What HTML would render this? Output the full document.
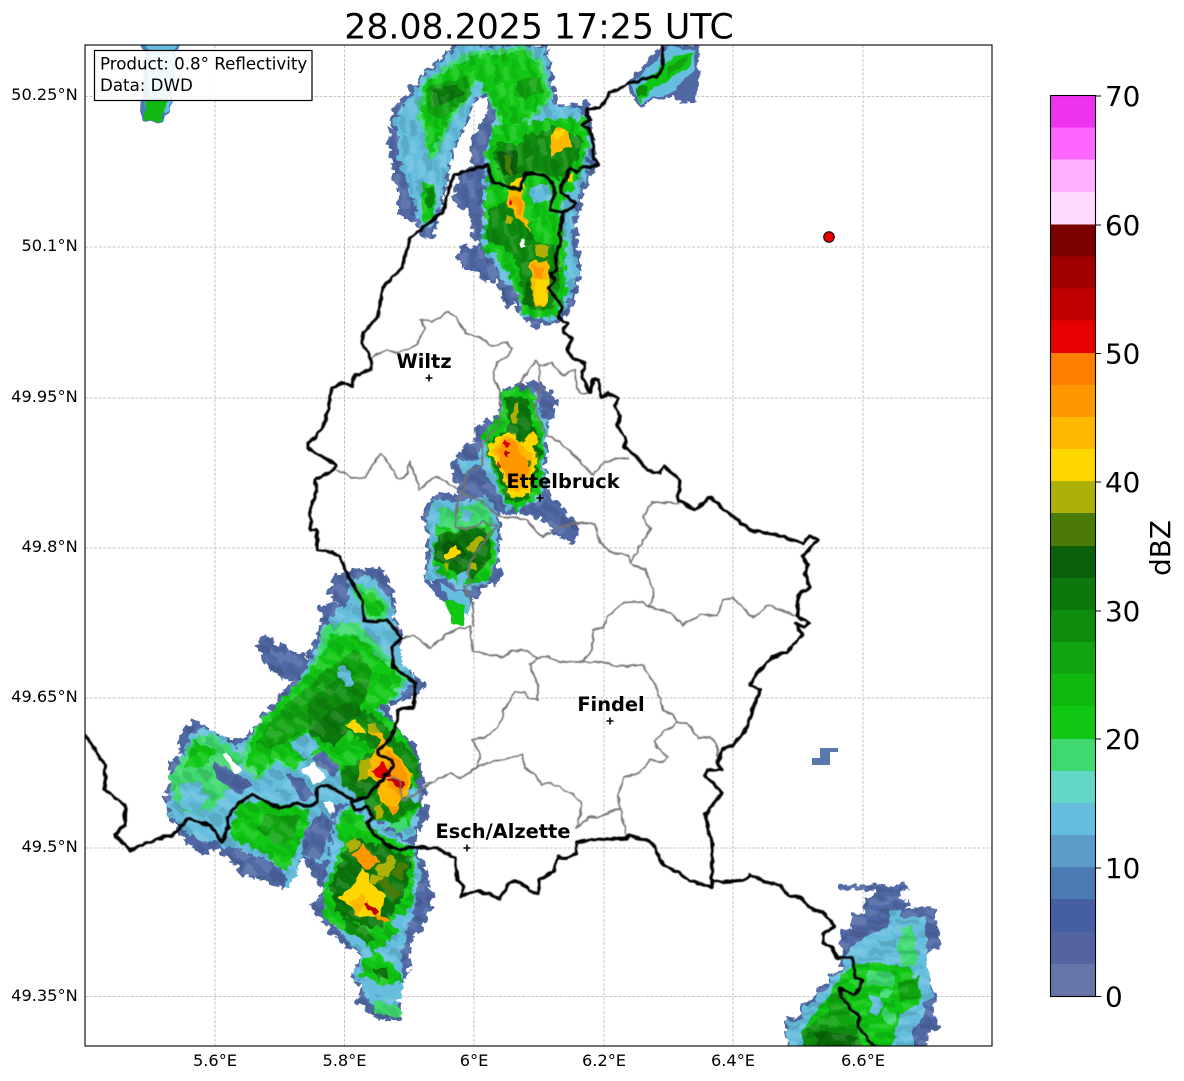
<!DOCTYPE html>
<html><head><meta charset="utf-8"><title>Radar</title>
<style>
html,body{margin:0;padding:0;background:#fff;width:1184px;height:1081px;overflow:hidden}
svg{display:block}
text{font-family:"DejaVu Sans","Liberation Sans",sans-serif;fill:#000}
.lat{font-size:16.2px;text-anchor:end}
.lon{font-size:16.2px;text-anchor:middle}
.city{font-size:19.4px;font-weight:bold;text-anchor:middle}
.cb{font-size:27.8px}
.e{stroke-width:15;stroke-dasharray:22 14;stroke-linejoin:bevel}
.f{stroke-width:9;stroke-dasharray:18 12;stroke-linejoin:bevel}
</style></head><body>
<svg width="1184" height="1081" viewBox="0 0 1184 1081" xmlns="http://www.w3.org/2000/svg">
<defs>
<clipPath id="ax"><rect x="85" y="45" width="907" height="1001"/></clipPath>
<filter id="j" filterUnits="userSpaceOnUse" x="0" y="0" width="1184" height="1081" color-interpolation-filters="sRGB">
<feTurbulence type="fractalNoise" baseFrequency="0.1" numOctaves="2" seed="4"/>
<feColorMatrix type="matrix" values="1 0 0 0 0 0 1 0 0 0 0 0 1 0 0 0 0 0 0 1" result="t"/>
<feDisplacementMap in="SourceGraphic" in2="t" scale="9" xChannelSelector="R" yChannelSelector="G"/>
</filter>
<filter id="w" filterUnits="userSpaceOnUse" x="0" y="0" width="1184" height="1081" color-interpolation-filters="sRGB">
<feTurbulence type="fractalNoise" baseFrequency="0.16" numOctaves="1" seed="2"/>
<feColorMatrix type="matrix" values="1 0 0 0 0 0 1 0 0 0 0 0 1 0 0 0 0 0 0 1" result="t"/>
<feDisplacementMap in="SourceGraphic" in2="t" scale="4.5" xChannelSelector="R" yChannelSelector="G"/>
<feGaussianBlur stdDeviation="0.4"/>
</filter>
<pattern id="tex" patternUnits="userSpaceOnUse" width="60" height="42" patternTransform="rotate(35) scale(3)">
<rect x="0" y="0" width="16" height="8" fill="#000" fill-opacity=".10"/>
<rect x="16" y="0" width="18" height="6" fill="#fff" fill-opacity=".10"/>
<rect x="38" y="3" width="20" height="7" fill="#000" fill-opacity=".07"/>
<rect x="4" y="11" width="18" height="7" fill="#fff" fill-opacity=".09"/>
<rect x="24" y="12" width="16" height="8" fill="#000" fill-opacity=".12"/>
<rect x="44" y="14" width="14" height="8" fill="#fff" fill-opacity=".11"/>
<rect x="0" y="23" width="14" height="8" fill="#fff" fill-opacity=".12"/>
<rect x="16" y="25" width="20" height="6" fill="#000" fill-opacity=".09"/>
<rect x="40" y="26" width="18" height="6" fill="#000" fill-opacity=".11"/>
<rect x="6" y="34" width="22" height="6" fill="#000" fill-opacity=".07"/>
<rect x="32" y="35" width="18" height="7" fill="#fff" fill-opacity=".10"/>
</pattern>
<pattern id="texN" href="#tex" patternTransform="rotate(82) scale(3 2.4)"></pattern>
<pattern id="texS" href="#tex" patternTransform="scale(3.5 2.2)"></pattern>
<polygon id="oN" points="225,15 500,15 530,200 620,190 640,300 640,380 600,480 585,560 600,700 575,800 540,840 470,860 425,820 400,790 380,800 355,720 315,720 280,690 260,690 230,650 250,620 310,630 280,580 270,510 225,490 240,400 280,385 275,310 320,230 330,170 290,170 220,330 160,590 130,590 105,540 60,530 60,460 50,440 30,320 40,210 110,130 170,70"/>
<polygon id="oE" points="610,270 700,250 720,250 770,300 755,350 730,400 740,470 730,530 730,560 830,680 820,730 770,700 720,650 660,630 620,640 590,620 600,690 590,760 600,840 550,860 520,900 450,895 380,830 385,700 370,640 410,585 480,590 460,490 500,440 530,420 525,385 600,350"/>
<polygon id="oW" points="505,70 530,20 580,0 670,0 710,100 695,135 730,200 700,270 800,350 720,395 680,400 700,470 770,540 780,610 800,670 775,700 810,725 760,800 740,870 800,940 790,960 490,960 470,930 430,850 370,950 250,910 175,830 115,850 85,820 25,740 35,710 20,690 40,630 25,580 65,560 65,490 100,455 190,510 240,510 290,470 340,410 400,330 345,310 290,225 320,200 380,240 445,270 450,250 490,160 480,115 530,110 510,60"/>
<polygon id="oS" points="100,20 130,10 340,130 385,240 395,310 360,390 330,420 325,510 290,590 300,660 240,655 170,600 190,570 155,540 190,470 95,395 35,320 60,290 100,250 60,240 40,200 90,180"/>
<polygon id="oD" points="180,50 380,45 385,60 355,65 355,90 390,95 360,115 465,115 480,235 445,240 430,280 465,380 460,440 475,475 440,480 440,560 20,560 25,445 65,440 65,400 110,390 115,345 150,345 150,310 185,310 185,255 185,180 220,180 220,135 255,135 250,90 285,80 280,60 180,55"/>
</defs>
<rect width="1184" height="1081" fill="#fff"/>

<g stroke="#b4b4b4" stroke-width="0.8" stroke-dasharray="3 1.6" fill="none">
<path d="M215 45V1046M344.5 45V1046M474 45V1046M604 45V1046M733 45V1046M863 45V1046"/>
<path d="M85 96.5H992M85 247H992M85 398H992M85 548H992M85 698H992M85 848H992M85 996.5H992"/>
</g>

<g clip-path="url(#ax)">
<g filter="url(#j)">
<!-- top-left sliver -->
<g transform="translate(80 30) scale(.3333)">
<polygon fill="#4c7ab2" points="192,40 295,40 270,245 240,282 190,270 182,235"/>
<polygon fill="#65bedd" points="205,40 285,40 268,245 240,250 200,240"/>
<polygon fill="#10b810" points="205,205 265,205 240,278 195,268"/>
</g>

<!-- north storm -->
<g transform="translate(380 40) scale(.3333)">
<use href="#oN" class="e" fill="#5068a4" stroke="#5068a4"/>
<polygon class="e" fill="#65bedd" stroke="#65bedd" points="235,20 490,20 520,200 600,210 630,300 620,390 590,470 570,600 590,700 560,790 520,840 430,820 410,750 370,720 310,610 315,520 320,340 350,240 370,190 320,130 280,180 210,340 165,540 130,570 100,470 60,370 50,240 120,130 180,70"/>
<polygon class="f" fill="#3fd96f" stroke="#3fd96f" points="270,40 430,20 480,60 515,170 440,250 370,280 330,180 290,120 260,170 200,260 180,320 150,360 115,220 130,130 200,80"/>
<polygon class="f" fill="#10c814" stroke="#10c814" points="275,55 420,35 470,65 505,165 440,235 375,260 335,170 290,110 255,160 195,245 175,300 150,340 130,220 135,130 200,95"/>
<polygon fill="#10a410" points="140,140 260,110 275,160 200,225 160,240 135,190"/>
<polygon fill="#0c780c" points="155,150 235,130 245,165 195,195 160,205"/>
<polygon fill="#10a410" points="400,125 480,110 490,160 430,175"/>
<polygon class="e" fill="#10c814" stroke="#10c814" points="350,260 450,250 530,240 610,240 620,320 610,380 570,450 530,520 550,600 550,700 560,760 520,830 440,825 415,760 380,680 320,620 320,500 330,380 320,340"/>
<polygon fill="#10c814" points="125,430 160,430 165,530 130,550"/>
<polygon fill="#0c8a0c" points="135,445 158,440 158,500 140,505"/>
<polygon class="f" fill="#0e8c0e" stroke="#0e8c0e" points="350,310 415,320 440,290 520,265 600,290 600,340 570,390 530,420 490,400 430,400 430,440 380,430 350,360"/>
<polygon class="f" fill="#0e8c0e" stroke="#0e8c0e" points="330,510 380,480 450,570 470,610 520,620 540,680 530,770 520,800 470,810 430,790 420,680 380,620 320,600"/>
<polygon fill="#0a5f0a" points="350,335 410,330 415,400 370,410"/>
<polygon fill="#0a6f0a" points="440,720 470,720 470,800 430,790"/>
<polygon fill="#65bedd" points="450,440 510,430 510,480 455,490"/>
<use href="#oN" fill="url(#texN)"/>
<polygon fill="#4a7a08" points="370,345 395,345 392,410 375,400"/>
<polygon fill="#adb006" points="372,530 400,530 395,550 378,548"/>
<polygon fill="#adb006" points="470,610 505,620 505,650 475,650"/>
<polygon fill="#ffd700" points="400,420 430,405 430,450 395,440"/>
<polygon fill="#ffb800" points="385,450 425,450 440,530 452,575 430,550 400,520 380,490"/>
<polygon fill="#ff9800" points="395,470 425,470 432,525 405,510"/>
<rect x="389" y="478" width="8" height="15" fill="#e00000"/>
<polygon fill="#ffb800" points="450,670 505,660 510,750 500,790 470,795 455,740"/>
<polygon fill="#ffd700" points="462,720 505,715 500,785 472,790"/>
<polygon fill="#ff9800" points="460,680 490,680 490,715 465,715"/>
<polygon fill="#ffb800" points="510,290 530,265 570,275 570,320 540,335 515,350"/>
<polygon fill="#ffd700" points="520,275 550,270 550,290 525,295"/>
<polygon fill="#ffd700" points="562,410 580,400 580,430 560,425"/>
<rect x="425" y="595" width="12" height="30" fill="#fff"/>
</g>

<!-- top right -->
<g transform="translate(380 40) scale(.3333)">
<polygon class="f" fill="#5068a4" stroke="#5068a4" points="850,15 955,15 955,90 945,180 900,190 890,160 850,170 770,195 745,130 800,70"/>
<polygon fill="#65bedd" points="860,20 945,30 945,90 880,150 835,165 775,190 760,130 810,80"/>
<polygon fill="#10c814" points="880,50 945,40 925,85 860,125 800,160 775,190 775,140 830,95"/>
<polygon fill="#10a410" points="870,70 925,50 900,85 850,115"/>
<polygon fill="#0e8c0e" points="775,140 800,130 795,160 770,175"/>
</g>

<!-- Ettelbruck storm -->
<g transform="translate(300 300) scale(.3333)">
<use href="#oE" class="e" fill="#5068a4" stroke="#5068a4"/>
<polygon class="f" fill="#65bedd" stroke="#65bedd" points="610,280 700,280 725,350 745,370 735,420 730,520 720,590 660,625 620,625 590,600 530,530 490,510 475,480 530,490 545,430 600,360"/>
<polygon fill="#5068a4" points="500,510 540,500 620,610 600,640 560,590"/>
<polygon class="f" fill="#10c814" stroke="#10c814" points="610,270 690,270 710,340 730,400 725,500 720,580 650,630 600,570 570,470 545,420 570,380 610,340"/>
<polygon class="f" fill="#0c780c" stroke="#0c780c" points="620,290 680,300 700,380 720,430 710,520 690,590 650,610 620,590 580,490 560,430 610,400 630,370"/>
<polygon class="f" fill="#65bedd" stroke="#65bedd" points="405,600 470,610 560,590 590,650 590,770 560,850 490,870 430,830 380,840 395,750 380,660"/>
<polygon fill="#3fd96f" points="415,625 470,630 550,600 580,660 560,690 480,700 420,690"/>
<polygon fill="#65bedd" points="490,630 520,640 505,670 485,660"/>
<polygon class="f" fill="#10c814" stroke="#10c814" points="410,680 470,690 570,670 585,770 570,830 510,855 440,830 400,790 410,730"/>
<polygon fill="#0c780c" points="415,710 480,690 560,680 575,770 520,840 450,810 400,780"/>
<polygon fill="#0a5f0a" points="425,730 470,715 500,760 470,800 430,775"/>
<use href="#oE" fill="url(#tex)"/>
<polygon fill="#adb006" points="640,310 655,305 650,370 635,365"/>
<polygon class="f" fill="#ffd700" stroke="#ffd700" points="560,435 630,395 660,430 700,395 715,425 700,450 710,490 690,540 690,580 630,590 615,530 590,490"/>
<polygon fill="#ffb800" points="575,445 630,405 670,440 700,460 700,500 680,550 680,570 635,575 620,530 595,480"/>
<polygon fill="#ff9800" points="590,450 630,415 675,470 685,510 660,550 632,550 610,500"/>
<polygon fill="#e00000" points="620,422 630,432 620,444 610,432"/>
<polygon fill="#c00000" points="620,448 630,458 620,470 610,458"/>
<polygon fill="#e00000" points="598,488 608,500 604,508 595,496"/>
<polygon fill="#4a7a08" points="678,480 695,480 690,498 680,495"/>
<polygon fill="#ffd700" points="430,760 470,735 478,755 440,782"/>
<polygon fill="#adb006" points="500,745 530,710 550,720 520,760"/>
<polygon fill="#adb006" points="505,790 525,785 530,810 510,810"/>
<polygon fill="#adb006" points="430,790 450,795 440,815"/>
<polygon fill="#65bedd" points="470,820 510,810 500,850 470,850"/>
</g>
<polygon fill="#5068a4" points="426,580 445,590 475,600 468,610 440,600"/>
<polygon fill="#65bedd" points="440,585 470,595 470,615 455,612"/>
<polygon fill="#10c814" points="443,598 465,606 462,626 452,623"/>

<!-- SW storm -->
<g transform="translate(160 570) scale(.3333)">
<use href="#oW" class="e" fill="#5068a4" stroke="#5068a4"/>
<polygon class="e" fill="#65bedd" stroke="#65bedd" points="570,30 630,20 690,90 720,270 760,330 700,390 640,400 690,470 760,600 770,700 770,760 730,840 730,870 770,950 510,960 510,900 430,840 385,950 370,890 260,840 180,820 100,800 30,735 40,625 100,490 140,480 230,540 290,480 350,420 420,340 470,240 510,150 570,90"/>
<polygon class="f" fill="#3fd96f" stroke="#3fd96f" points="30,625 100,510 160,500 240,560 230,620 170,700 140,720 75,720 40,680"/>
<polygon fill="#65bedd" points="60,650 110,630 150,680 110,730 65,710"/>
<polygon fill="#10c814" points="100,510 170,540 130,590 75,590"/>
<polygon fill="#3fd96f" points="590,40 640,60 690,110 665,155 620,145 585,70"/>
<polygon fill="#10c814" points="600,60 640,75 675,110 660,145 625,135"/>
<polygon class="f" fill="#3fd96f" stroke="#3fd96f" points="500,170 590,160 660,230 740,330 680,400 600,400 520,530 430,560 400,600 350,570 290,630 240,570 290,470 340,420 420,340 470,260"/>
<polygon class="f" fill="#10c814" stroke="#10c814" points="520,190 590,200 640,250 725,330 680,395 640,420 700,460 770,570 770,620 700,680 780,700 740,770 660,750 630,700 560,640 540,600 450,550 400,590 350,560 295,610 260,570 295,470 340,420 420,340 470,280"/>
<polygon fill="#10a410" points="340,440 500,300 590,240 640,300 610,400 520,520 450,480 400,500 330,540 290,520"/>
<polygon fill="#0e8c0e" points="440,400 540,320 620,340 600,420 520,530 450,490"/>
<polygon fill="#0c780c" points="450,480 520,410 590,400 610,430 570,480 520,530"/>
<polygon fill="#65bedd" points="530,300 560,290 585,340 555,355"/>
<polygon fill="#65bedd" points="390,520 450,490 480,530 430,565"/>
<polygon fill="#5068a4" points="455,570 490,540 540,590 520,620"/>
<polygon fill="#5068a4" points="160,570 210,600 280,640 240,670 170,630"/>
<polygon fill="#5068a4" points="380,610 420,620 470,680 420,690"/>
<polygon class="f" fill="#10c814" stroke="#10c814" points="310,700 450,720 420,810 380,900 300,840 210,800 240,700"/>
<polygon fill="#10a410" points="320,730 420,740 400,810 350,820 290,780"/>
<polygon fill="#5068a4" points="430,780 490,720 520,760 480,870 430,850"/>
<polygon class="f" fill="#0e8c0e" stroke="#0e8c0e" points="560,460 620,420 680,480 770,570 770,620 730,680 780,700 700,760 640,740 610,690 550,640 545,610 600,570 650,540 560,480"/>
<polygon fill="#0c780c" points="560,640 600,590 640,600 650,670 610,680"/>
<use href="#oW" fill="url(#tex)"/>
<polygon fill="#fff" points="185,555 200,545 247,597 228,612"/>
<polygon fill="#fff" points="425,600 465,580 500,625 468,645"/>
<polygon fill="#fff" points="490,700 510,690 535,720 515,735"/>
<polygon fill="#ffd700" points="560,465 590,450 620,490 590,490"/>
<polygon fill="#adb006" points="615,460 645,450 660,490 630,490"/>
<polygon fill="#adb006" points="600,570 650,560 640,610 590,640"/>
<polygon fill="#ffb800" points="630,485 660,490 700,540 725,570 760,625 740,670 700,730 660,690 650,640 625,610 640,540 665,510"/>
<polygon fill="#ff9800" points="680,540 720,570 745,640 720,680 685,650"/>
<polygon fill="#e00000" points="635,600 660,575 695,610 670,630"/>
<polygon fill="#c00000" points="680,630 700,620 735,640 720,655"/>
<polygon fill="#adb006" points="640,710 670,700 665,745 650,745"/>
<polygon fill="#ff9800" points="680,705 720,710 700,735"/>
<polygon fill="#3fd96f" points="680,770 730,745 745,770 700,810"/>
<polygon fill="#10c814" points="750,620 780,640 765,660"/>
</g>

<!-- S storm -->
<g transform="translate(300 800) scale(.3333)">
<use href="#oS" class="e" fill="#5068a4" stroke="#5068a4"/>
<polygon class="f" fill="#65bedd" stroke="#65bedd" points="110,40 150,20 340,140 360,230 330,360 300,450 310,560 285,630 220,620 190,570 200,540 160,540 190,470 130,400 70,340 75,280"/>
<polygon class="f" fill="#10c814" stroke="#10c814" points="70,350 70,280 130,140 110,80 150,20 230,100 340,150 340,290 290,400 220,450 150,400"/>
<polygon fill="#10c814" points="185,490 225,450 300,520 310,550 280,570 220,540 180,530"/>
<polygon fill="#0c780c" points="225,505 255,505 265,535 230,540"/>
<polygon fill="#3fd96f" points="225,600 310,630 300,650 225,640"/>
<polygon class="f" fill="#0c780c" stroke="#0c780c" points="90,260 135,160 170,110 200,130 330,170 320,250 300,300 250,380 200,380 120,340 110,310"/>
<polygon fill="#0e8c0e" points="130,350 200,390 230,420 190,435 130,385"/>
<use href="#oS" fill="url(#tex)"/>
<polygon fill="#ffd700" points="115,295 150,265 190,200 210,245 255,290 240,350 180,350 160,320"/>
<polygon fill="#ffb800" points="150,300 190,280 200,320 170,345"/>
<polygon fill="#ff9800" points="160,165 190,135 240,185 210,210 185,190"/>
<polygon fill="#ff9800" points="205,305 235,345 270,360 255,375 205,330"/>
<polygon fill="#c00000" points="195,320 205,312 235,335 225,345"/>
<polygon fill="#adb006" points="130,130 170,110 180,140 155,160"/>
<polygon fill="#adb006" points="240,190 275,160 290,180 260,230 225,220"/>
<polygon fill="#4a7a08" points="290,190 325,200 300,240 270,220"/>
<polygon fill="#4a7a08" points="230,240 250,230 300,280 280,300"/>
<polygon fill="#adb006" points="210,225 245,225 235,260 210,250"/>
<polygon fill="#65bedd" points="285,340 325,350 300,385 280,370"/>
<polygon fill="#65bedd" points="160,540 280,560 300,540 310,570 285,600 240,585 185,565"/>
<polygon fill="#65bedd" points="130,400 170,400 200,440 160,435"/>
</g>

<!-- SE storm -->
<g transform="translate(780 870) scale(.3333)">
<use href="#oD" class="f" fill="#5068a4" stroke="#5068a4"/>
<polygon fill="#65bedd" points="330,120 360,120 360,140 435,140 445,240 440,280 460,380 430,400 430,440 400,470 400,560 20,560 25,450 65,450 70,405 110,400 115,375 150,350 150,315 185,315 190,260 225,220 290,190 325,170"/>
<polygon fill="#3fd96f" points="370,175 400,170 405,225 410,280 370,290 350,240"/>
<polygon fill="#10c814" points="225,280 390,290 420,380 420,400 360,430 330,560 65,560 70,470 105,430 145,375 185,320"/>
<polygon fill="#3fd96f" points="265,300 335,305 340,350 265,345"/>
<polygon fill="#3fd96f" points="300,360 345,360 340,380 300,380"/>
<polygon fill="#3fd96f" points="310,420 350,430 340,470 305,450"/>
<polygon fill="#65bedd" points="270,375 305,380 300,430 270,425"/>
<polygon fill="#65bedd" points="350,465 400,470 400,560 360,560"/>
<polygon fill="#10a410" points="145,375 190,360 230,440 230,495 270,560 65,560 65,480 110,450 145,420"/>
<polygon fill="#0e8c0e" points="100,460 230,480 235,510 270,560 65,560 65,490"/>
<polygon fill="#0a6a0a" points="105,485 180,490 230,500 225,560 110,560"/>
<polygon fill="#10a410" points="350,340 415,320 420,380 360,395"/>
<use href="#oD" fill="url(#texS)"/>
</g>
</g>

<polygon fill="#5a78ac" points="820,748 838,748 838,752 830,752 830,765 812,765 812,758 820,758"/>

<g filter="url(#w)">
<!-- gray canton borders -->
<g fill="none" stroke="#757575" stroke-width="1.8" stroke-linejoin="round">
<path d="M372 357 388 350 400 353 418 343 425 328 420 320 432 322 448 312 457 317 465 333 482 338 492 347 507 342 512 348 508 357 497 362 493 378 500 390 500 407 500 423 492 433 483 443 482 465 467 473 463 493"/>
<path d="M518 385 535 360 540 365 552 363 562 375 575 370 577 387 580 393 592 393"/>
<path d="M540 365 540 387 535 407 545 433 567 448 593 475 605 462 628 457"/>
<path d="M336 470 343 472 350 478 365 477 381 453 398 478 405 478 410 462 420 490 435 476 447 482 463 493 457 500 455 527 467 530 483 522 497 527 490 533 483 543 470 563 467 573 472 583 463 587 473 603 473 627"/>
<path d="M463 493 480 500 497 515 503 518 513 517 527 520 537 533 543 537 560 527 577 523 595 524 600 543 613 553 628 555 630 563 645 570 653 588 653 602 648 606"/>
<path d="M630 563 650 530 643 517 652 502 678 503"/>
<path d="M402 638 413 635 430 648 450 632 460 628 470 627 473 652 503 657 513 650 528 651 537 658 548 656 560 662 583 662 603 662 613 666 643 666 658 690 663 710 673 715 677 723 687 723 698 738 710 737 718 748 717 757"/>
<path d="M677 723 663 732 655 742 657 748 668 757 663 762 650 760 640 773 623 777 618 795 620 808 627 837"/>
<path d="M620 808 598 817 588 818 577 828 582 805 575 795 548 782 541 785 535 775 525 768 522 755 503 760 493 761 477 767 460 779 450 773 430 783 420 790 407 800 402 800 400 780 390 777"/>
<path d="M477 767 480 755 473 740 490 735 502 720 503 712 515 692 525 692 528 698 538 700 538 685 530 665 537 658"/>
<path d="M583 662 592 650 593 630 603 628 607 618 623 603 643 602 650 607 670 613 683 625 700 615 718 616 722 600 733 598 753 618 768 605 798 617"/>
</g>

<!-- black borders -->
<g fill="none" stroke="#000" stroke-width="3.2" stroke-linejoin="round" stroke-linecap="round">
<path d="M663 47 662 60 663 68 657 77 643 78 638 82 628 83 618 90 610 92 607 98 600 108 588 109 587 115 590 120 582 125 588 128 593 140 593 155 598 165 588 167 580 168 577 173 570 168 567 177 562 183 560 192 568 197 575 203 573 208 563 212 560 233 560 243 557 253 555 257 557 270 550 273 555 280 548 288 553 293 562 307 558 318 568 323 563 332 572 338 567 350 573 358 585 363 582 377 590 393 593 380 598 380 602 398 608 393 618 398 615 407 620 415 617 425 625 437 625 448 637 457 647 470 660 473 664 466 680 480 678 500 695 510 710 497 725 510 750 530 775 535 795 540 803 543 810 536 818 540 810 548 802 557 808 565 805 573 810 587 798 595 798 617 809 623 805 627 795 623 802 635 787 652 772 657 753 678 750 685 760 690 750 717 747 728 733 745 722 750 717 763 722 770 708 770 705 775 722 793 705 815 712 843 712 887 690 880 665 865 660 860 653 843 630 835 627 838 588 840 577 843 576 853 567 859 558 857 553 872 539 880 539 894 530 891 520 882 510 882 500 899 490 894 475 891 461 896 464 887 457 880 455 858 445 853 438 848 427 848 415 847 400 850 387 845 373 833 367 823 373 818 368 807 355 810 352 802 367 797 393 767 392 760 378 755 378 750 390 740 397 722 398 710 414 707 415 683 393 667 392 647 402 638 387 620 365 622 362 600 345 570 340 557 332 552 317 550 317 530 311 530 310 510 317 490 315 480 333 470 336 465 308 448 308 443 317 435 325 423 332 388 343 383 352 386 355 375 370 370 372 360 362 343 363 333 378 317 383 287 402 268 410 238 443 212 453 175 488 165 493 182 520 190 525 173 543 175 553 183 555 193 550 210 563 212"/>
<path d="M353 800 327 785 317 788 317 803 308 807 298 803 280 808 253 795 240 802 227 817 228 827 222 842 210 825 187 819 173 835 160 838 130 850 115 835 125 825 125 805 105 790 105 765 85 735"/>
<path d="M712 887 712 880 723 882 745 880 750 875 765 882 780 885 788 895 800 898 813 910 823 912 835 927 823 933 823 943 832 948 838 958 852 958 855 977 863 980 855 995 840 988 842 998 852 1010 860 1017 858 1027 873 1045 880 1050"/>
</g>
</g>

<!-- markers -->
<g fill="none" stroke="#000" stroke-width="1.6">
<path d="M425.5 378H432.5M429 374.5V381.5"/>
<path d="M536.5 498H543.5M540 494.5V501.5"/>
<path d="M606.5 721H613.5M610 717.5V724.5"/>
<path d="M463.5 848H470.5M467 844.5V851.5"/>
</g>
<circle cx="829" cy="237" r="5.3" fill="#e60000" stroke="#000" stroke-width="1"/>
</g>

<text class="city" x="424" y="368">Wiltz</text>
<text class="city" x="563" y="488">Ettelbruck</text>
<text class="city" x="611" y="711">Findel</text>
<text class="city" x="503" y="838">Esch/Alzette</text>

<rect x="85" y="45" width="907" height="1001" fill="none" stroke="#000" stroke-width="1.1"/>

<rect x="94.5" y="50.5" width="217.5" height="50" fill="#fff" fill-opacity=".9" stroke="#000" stroke-width="1.2"/>
<text x="100" y="69.5" font-size="16.67">Product: 0.8° Reflectivity</text>
<text x="100" y="91" font-size="16.67">Data: DWD</text>

<text x="539" y="38.5" font-size="34.7" text-anchor="middle">28.08.2025 17:25 UTC</text>

<text class="lat" x="77.7" y="100">50.25°N</text>
<text class="lat" x="77.7" y="251">50.1°N</text>
<text class="lat" x="77.7" y="402">49.95°N</text>
<text class="lat" x="77.7" y="552">49.8°N</text>
<text class="lat" x="77.7" y="702">49.65°N</text>
<text class="lat" x="77.7" y="852">49.5°N</text>
<text class="lat" x="77.7" y="1001">49.35°N</text>
<text class="lon" x="215" y="1066">5.6°E</text>
<text class="lon" x="344.5" y="1066">5.8°E</text>
<text class="lon" x="474" y="1066">6°E</text>
<text class="lon" x="604" y="1066">6.2°E</text>
<text class="lon" x="733" y="1066">6.4°E</text>
<text class="lon" x="863" y="1066">6.6°E</text>

<!-- colorbar -->
<g shape-rendering="crispEdges">
<rect x="1051" y="95.5" width="44.5" height="32.5" fill="#ee33ee"/>
<rect x="1051" y="127.5" width="44.5" height="32.5" fill="#ff66ff"/>
<rect x="1051" y="159.5" width="44.5" height="33" fill="#ffb0ff"/>
<rect x="1051" y="192" width="44.5" height="33" fill="#ffd9ff"/>
<rect x="1051" y="224.5" width="44.5" height="32.5" fill="#7a0000"/>
<rect x="1051" y="256.5" width="44.5" height="32.5" fill="#a00000"/>
<rect x="1051" y="288.5" width="44.5" height="32.5" fill="#c00000"/>
<rect x="1051" y="320.5" width="44.5" height="33" fill="#e60000"/>
<rect x="1051" y="353" width="44.5" height="32.5" fill="#ff7f00"/>
<rect x="1051" y="385" width="44.5" height="32.5" fill="#ff9800"/>
<rect x="1051" y="417" width="44.5" height="32.5" fill="#ffb800"/>
<rect x="1051" y="449" width="44.5" height="32.5" fill="#ffd700"/>
<rect x="1051" y="481" width="44.5" height="32.5" fill="#adb006"/>
<rect x="1051" y="513" width="44.5" height="33" fill="#4a7a08"/>
<rect x="1051" y="546" width="44.5" height="32.5" fill="#0a5f0a"/>
<rect x="1051" y="578" width="44.5" height="32.5" fill="#0c780c"/>
<rect x="1051" y="610" width="44.5" height="32.5" fill="#0e8c0e"/>
<rect x="1051" y="642" width="44.5" height="32.5" fill="#10a410"/>
<rect x="1051" y="674" width="44.5" height="33" fill="#10b810"/>
<rect x="1051" y="706" width="44.5" height="33" fill="#10c814"/>
<rect x="1051" y="739" width="44.5" height="32.5" fill="#3fd96f"/>
<rect x="1051" y="771" width="44.5" height="32.5" fill="#64d6c6"/>
<rect x="1051" y="803" width="44.5" height="32.5" fill="#65bedd"/>
<rect x="1051" y="835" width="44.5" height="33" fill="#5b9dc6"/>
<rect x="1051" y="867" width="44.5" height="33" fill="#4c7ab2"/>
<rect x="1051" y="899" width="44.5" height="33" fill="#445fa2"/>
<rect x="1051" y="932" width="44.5" height="32.5" fill="#54649e"/>
<rect x="1051" y="964" width="44.5" height="33" fill="#6675a8"/>
</g>
<rect x="1050.5" y="95.5" width="45" height="901" fill="none" stroke="#000" stroke-width="1.1"/>
<path d="M1095.5 96H1101M1095.5 225H1101M1095.5 353.5H1101M1095.5 482H1101M1095.5 611H1101M1095.5 739H1101M1095.5 868H1101M1095.5 996.5H1101" stroke="#000" stroke-width="1.1"/>
<text class="cb" x="1105" y="106">70</text>
<text class="cb" x="1105" y="235">60</text>
<text class="cb" x="1105" y="363.5">50</text>
<text class="cb" x="1105" y="492">40</text>
<text class="cb" x="1105" y="621">30</text>
<text class="cb" x="1105" y="749">20</text>
<text class="cb" x="1105" y="878">10</text>
<text class="cb" x="1105" y="1006.5">0</text>
<text transform="translate(1170 548) rotate(-90)" font-size="27.8" text-anchor="middle">dBZ</text>
</svg>
</body></html>
